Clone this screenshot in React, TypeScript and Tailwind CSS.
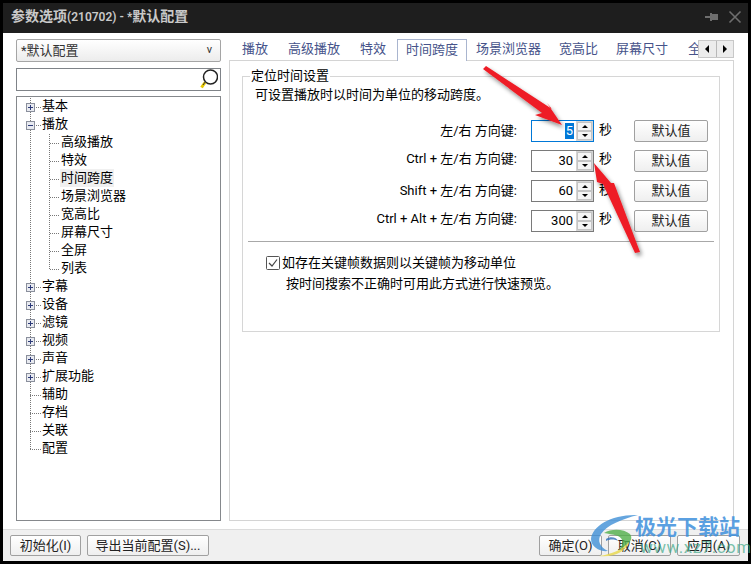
import React from "react";

const FONT = { fontFamily: 'Roboto,"Noto Sans CJK SC",sans-serif' };

function TopGutter({ icon, last }: { icon?: "plus" | "minus"; last?: boolean }) {
  return (
    <svg width="24" height="18" className="shrink-0">
      <line x1="12.5" y1="0" x2="12.5" y2={last ? 10 : 18} stroke="#777" strokeDasharray="1 1" />
      <line x1="12" y1="9.5" x2="23" y2="9.5" stroke="#777" strokeDasharray="1 1" />
      {icon && (
        <g>
          <rect x="8.5" y="5.5" width="8" height="8" fill="#e8eaf0" stroke="#8a8f9c" />
          <line x1="10" y1="9.5" x2="15" y2="9.5" stroke="#2c3a78" />
          {icon === "plus" && <line x1="12.5" y1="7" x2="12.5" y2="12" stroke="#2c3a78" />}
        </g>
      )}
    </svg>
  );
}

function ChildGutter({ last }: { last?: boolean }) {
  return (
    <svg width="42" height="18" className="shrink-0">
      <line x1="12.5" y1="0" x2="12.5" y2="18" stroke="#777" strokeDasharray="1 1" />
      <line x1="31.5" y1="0" x2="31.5" y2={last ? 10 : 18} stroke="#777" strokeDasharray="1 1" />
      <line x1="32" y1="9.5" x2="41" y2="9.5" stroke="#777" strokeDasharray="1 1" />
    </svg>
  );
}

function Top({ label, icon, last }: { label: string; icon?: "plus" | "minus"; last?: boolean }) {
  return (
    <div className="flex h-[18px] items-center">
      <TopGutter icon={icon} last={last} />
      <span className="text-[13px] leading-[18px] -mt-[2px] text-black">{label}</span>
    </div>
  );
}

function Child({ label, active, last }: { label: string; active?: boolean; last?: boolean }) {
  return (
    <div className="flex h-[18px] items-center">
      <ChildGutter last={last} />
      <span className={`text-[13px] leading-[18px] -mt-[2px] text-black px-[1px] ${active ? "bg-[#f0f0f0]" : ""}`}>{label}</span>
    </div>
  );
}

function Tab({ label, cls }: { label: string; cls: string }) {
  return <div className={`shrink-0 text-[13px] leading-[20px] text-[#46538a] ${cls}`}>{label}</div>;
}

function Spinner() {
  return (
    <div className="w-[17px] h-full bg-[#d4d4d4] flex flex-col justify-between p-[1px] shrink-0">
      <div className="h-[9px] bg-[#f4f4f4] border border-[#c4c4c4] flex items-center justify-center">
        <div className="w-0 h-0 border-x-[3px] border-x-transparent border-b-[3px] border-b-black" />
      </div>
      <div className="h-[9px] bg-[#f4f4f4] border border-[#c4c4c4] flex items-center justify-center">
        <div className="w-0 h-0 border-x-[3px] border-x-transparent border-t-[3px] border-t-black" />
      </div>
    </div>
  );
}

function Row({ label, value, active, raised }: { label: string; value: string; active?: boolean; raised?: boolean }) {
  return (
    <div className="flex h-[22px] items-center">
      <div className={`w-[274px] text-right text-[13px] leading-[18px] text-black whitespace-pre ${raised ? "pb-[4px]" : ""}`}>{label}</div>
      <div className={`ml-[14px] w-[63px] h-[22px] border flex items-stretch justify-end ${active ? "border-[#0078d7]" : "border-[#7a7a7a]"}`}>
        <div className="flex-1 flex items-center justify-end pr-[2px]">
          <span className={`text-[13px] leading-[16px] px-[1px] ${active ? "bg-[#0078d7] text-white" : "text-black"}`}>{value}</span>
        </div>
        <Spinner />
      </div>
      <div className={`ml-[5px] w-[13px] text-[13px] leading-[18px] text-black ${raised ? "pb-[4px]" : "pb-[2px]"}`}>秒</div>
      <Btn label="默认值" cls="ml-[22px] w-[74px] h-[22px]" />
    </div>
  );
}

function Btn({ label, cls }: { label: string; cls: string }) {
  return (
    <div className={`border border-[#a0a0a0] rounded-[2px] bg-gradient-to-b from-[#ffffff] to-[#efefef] flex items-center justify-center text-[13px] leading-[16px] text-[#222] shrink-0 ${cls}`}>
      {label}
    </div>
  );
}

export default function App() {
  return (
    <div style={FONT} className="relative w-[751px] h-[564px] bg-black p-[3px] flex flex-col overflow-hidden">
      <div className="h-[30px] bg-[#1e1e1e] flex items-center pl-[8px] pr-[3px] pb-[3px] shrink-0">
        <span className="text-[14px] font-semibold text-[#c9c9c9] leading-[20px] flex-1">
          参数选项<span className="text-[12px]">(210702) - *</span>默认配置
        </span>
        <svg width="40" height="16" viewBox="0 0 40 16" fill="#6e6e6e" className="shrink-0">
          <rect x="0" y="7" width="5" height="2" />
          <rect x="5" y="4" width="2" height="8" />
          <rect x="7" y="5" width="6" height="6" />
          <path d="M24.5 2.5 L35.5 13.5 M35.5 2.5 L24.5 13.5" stroke="#6e6e6e" strokeWidth="1.6" fill="none" />
        </svg>
      </div>

      <div className="flex-1 bg-white flex flex-col min-h-0">
        <div className="flex-1 flex pt-[6px] pl-[13px] pr-[14px] pb-[8px] min-h-0">
          <div className="w-[205px] flex flex-col shrink-0">
            <div className="h-[23px] border border-[#a5a5a5] rounded-[2px] bg-gradient-to-b from-[#ffffff] to-[#ececec] flex items-center justify-between pl-[4px] pr-[8px] text-[13px] text-[#333]">
              <span>*默认配置</span>
              <span className="text-[11px]">v</span>
            </div>
            <div className="mt-[6px] h-[23px] border border-[#7f8388] bg-white flex items-center justify-end pr-[2px]">
              <svg width="18" height="21" viewBox="0 0 18 21">
                <circle cx="10.5" cy="8" r="7" fill="#fff" stroke="#222" strokeWidth="1.5" />
                <line x1="5" y1="13.5" x2="1.5" y2="18.5" stroke="#e8c800" strokeWidth="3" />
                <line x1="5.5" y1="12.5" x2="3" y2="16" stroke="#333" strokeWidth="1" />
              </svg>
            </div>
            <div className="mt-[5px] flex-1 border border-[#85888c] pl-[1px] pt-[1px] overflow-hidden">
              <Top label="基本" icon="plus" />
              <Top label="播放" icon="minus" />
              <Child label="高级播放" />
              <Child label="特效" />
              <Child label="时间跨度" active />
              <Child label="场景浏览器" />
              <Child label="宽高比" />
              <Child label="屏幕尺寸" />
              <Child label="全屏" />
              <Child label="列表" last />
              <Top label="字幕" icon="plus" />
              <Top label="设备" icon="plus" />
              <Top label="滤镜" icon="plus" />
              <Top label="视频" icon="plus" />
              <Top label="声音" icon="plus" />
              <Top label="扩展功能" icon="plus" />
              <Top label="辅助" />
              <Top label="存档" />
              <Top label="关联" />
              <Top label="配置" last />
            </div>
          </div>

          <div className="ml-[8px] w-[505px] flex flex-col shrink-0">
            <div className="relative h-[22px] flex items-end overflow-hidden">
              <Tab label="播放" cls="pl-[13px] pr-[10px] mb-[2px]" />
              <Tab label="高级播放" cls="px-[10px] mb-[2px]" />
              <Tab label="特效" cls="pl-[10px] pr-[10px] mb-[2px]" />
              <div className="shrink-0 ml-[1px] w-[70px] h-[22px] border border-b-0 border-[#a9b5cf] bg-white text-center text-[13px] leading-[20px] text-[#46538a]">时间跨度</div>
              <Tab label="场景浏览器" cls="pl-[9px] pr-[9px] mb-[2px]" />
              <Tab label="宽高比" cls="px-[9px] mb-[2px]" />
              <Tab label="屏幕尺寸" cls="pl-[9px] pr-[10px] mb-[2px]" />
              <Tab label="全屏" cls="px-[10px] mb-[2px]" />
              <div className="absolute right-0 top-[1px] w-[36px] h-[18px] flex border border-[#c8c8c8] bg-[#ececec]">
                <div className="flex-1 flex items-center justify-center border-r border-[#b8b8b8]">
                  <div className="w-0 h-0 border-y-[4px] border-y-transparent border-r-[4px] border-r-black" />
                </div>
                <div className="flex-1 flex items-center justify-center">
                  <div className="w-0 h-0 border-y-[4px] border-y-transparent border-l-[4px] border-l-black" />
                </div>
              </div>
            </div>
            <div className="flex-1 border border-[#d4d4d4] pt-[6px] pl-[12px] pr-[13px] -mt-[1px] bg-white">
              <fieldset className="h-[265px] border border-[#d6d6d6]">
                <legend className="ml-[7px] px-[1px] text-[13px] leading-[18px] text-black">定位时间设置</legend>
                <div className="pl-[12px] pt-[1px] text-[13px] leading-[18px] text-black">可设置播放时以时间为单位的移动跨度。</div>
                <div className="mt-[16px] flex flex-col gap-[8px]">
                  <Row label="左/右 方向键:" value="5" active />
                  <Row label="Ctrl + 左/右 方向键:" value="30" raised />
                  <Row label="Shift + 左/右 方向键:" value="60" />
                  <Row label="Ctrl + Alt + 左/右 方向键:" value="300" raised />
                </div>
                <div className="mt-[9px] mx-[5px] border-t border-[#a8a8a8]" />
                <div className="mt-[12px] ml-[23px] flex items-center h-[18px]">
                  <svg width="14" height="14" viewBox="0 0 14 14" className="shrink-0">
                    <rect x="0.5" y="0.5" width="13" height="13" rx="1" fill="#fff" stroke="#555" />
                    <path d="M3 7 L6 10 L11 3.5" fill="none" stroke="#444" strokeWidth="1.2" />
                  </svg>
                  <span className="ml-[2px] text-[13px] leading-[18px] text-black">如存在关键帧数据则以关键帧为移动单位</span>
                </div>
                <div className="mt-[3px] ml-[43px] text-[13px] leading-[18px] text-black">按时间搜索不正确时可用此方式进行快速预览。</div>
              </fieldset>
            </div>
          </div>
        </div>

        <div className="h-[32px] bg-[#f0f0f0] border-t border-[#dcdcdc] flex items-start pt-[5px] pl-[7px] pr-[8px] shrink-0">
          <Btn label="初始化(I)" cls="w-[71px] h-[21px]" />
          <Btn label="导出当前配置(S)..." cls="ml-[6px] w-[122px] h-[21px]" />
          <div className="flex-1" />
          <Btn label="确定(O)" cls="w-[63px] h-[21px]" />
          <Btn label="取消(C)" cls="ml-[6px] w-[63px] h-[21px]" />
          <Btn label="应用(A)" cls="ml-[6px] w-[63px] h-[21px]" />
        </div>
      </div>

      <svg width="751" height="564" viewBox="0 0 751 564" className="absolute left-0 top-0 pointer-events-none">
        <defs>
          <filter id="sh" x="-20%" y="-20%" width="140%" height="140%">
            <feDropShadow dx="2" dy="3" stdDeviation="2" floodColor="#000" floodOpacity="0.45" />
          </filter>
        </defs>
        <g filter="url(#sh)" fill="#ee1c25">
          <path d="M483 69 L486 66 L552 109 L547 103 L562 125 L535 115 L542 113 Z" />
          <path d="M635 253 L640 252 L614 183 L611 183 L594 163 L597 182 L603 184 Z" />
        </g>
        <g opacity="0.8">
          <path d="M638 515 C612 514 592 526 591 539 C591 547 600 552 608 551 C600 547 597 541 601 534 C607 525 622 519 638 515 Z" fill="#3f8fd6" />
          <path d="M604 533 C612 528 624 529 630 534 C634 539 629 545 618 551 C624 544 624 539 618 536 C612 534 608 534 604 533 Z" fill="#52b04a" />
          <path d="M599 556 C612 554 622 550 629 542 C627 551 613 558 599 556 Z" fill="#e8d84a" />
          <path d="M606 539 C610 536 617 537 618 541 C615 539 610 539 606 541 Z" fill="#2f6fb8" />
        </g>
      </svg>
      <div className="absolute left-[635px] top-[514px] text-[21px] leading-[26px] font-bold text-[#3d8fdc]/85 whitespace-nowrap pointer-events-none">极光下载站</div>
      <div className="absolute left-[640px] top-[537px] text-[17px] leading-[20px] tracking-[0.5px] text-[#3fa98a]/70 whitespace-nowrap pointer-events-none">www.xz7.com</div>
    </div>
  );
}
